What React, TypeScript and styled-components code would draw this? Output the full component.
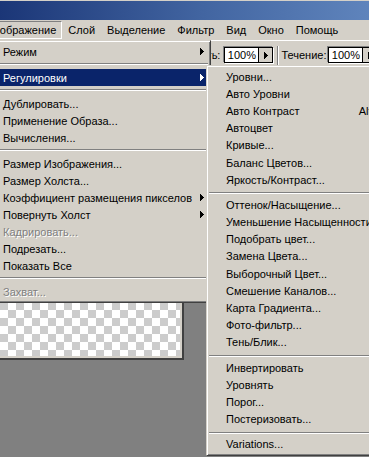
import React from 'react';
import styled, { createGlobalStyle } from 'styled-components';

type Entry =
  | { kind: 'sep' }
  | { kind: 'item'; label: string; arrow?: boolean; disabled?: boolean; active?: boolean; shortcut?: string };

type Metrics = { row: number; sep: number; line: number };

const sep: Entry = { kind: 'sep' };
const item = (label: string, extra: Partial<Omit<Extract<Entry, { kind: 'item' }>, 'kind' | 'label'>> = {}): Entry => ({
  kind: 'item',
  label,
  ...extra,
});

const imageMenu: Entry[] = [
  item('Режим', { arrow: true }),
  sep,
  item('Регулировки', { arrow: true, active: true }),
  sep,
  item('Дублировать...'),
  item('Применение Образа...'),
  item('Вычисления...'),
  sep,
  item('Размер Изображения...'),
  item('Размер Холста...'),
  item('Коэффициент размещения пикселов', { arrow: true }),
  item('Повернуть Холст', { arrow: true }),
  item('Кадрировать...', { disabled: true }),
  item('Подрезать...'),
  item('Показать Все'),
  sep,
  item('Захват...', { disabled: true }),
];

const adjustMenu: Entry[] = [
  item('Уровни...', { shortcut: 'Ctrl+L' }),
  item('Авто Уровни', { shortcut: 'Shift+Ctrl+L' }),
  item('Авто Контраст', { shortcut: 'Alt+Shift+Ctrl+L' }),
  item('Автоцвет', { shortcut: 'Shift+Ctrl+B' }),
  item('Кривые...', { shortcut: 'Ctrl+M' }),
  item('Баланс Цветов...', { shortcut: 'Ctrl+B' }),
  item('Яркость/Контраст...'),
  sep,
  item('Оттенок/Насыщение...', { shortcut: 'Ctrl+U' }),
  item('Уменьшение Насыщенности', { shortcut: 'Shift+Ctrl+U' }),
  item('Подобрать цвет...'),
  item('Замена Цвета...'),
  item('Выборочный Цвет...'),
  item('Смешение Каналов...'),
  item('Карта Градиента...'),
  item('Фото-фильтр...'),
  item('Тень/Блик...'),
  sep,
  item('Инвертировать', { shortcut: 'Ctrl+I' }),
  item('Уровнять'),
  item('Порог...'),
  item('Постеризовать...'),
  sep,
  item('Variations...'),
];

const menuBarItems = ['Изображение', 'Слой', 'Выделение', 'Фильтр', 'Вид', 'Окно', 'Помощь'];

const GlobalStyle = createGlobalStyle`
  html, body {
    margin: 0;
    padding: 0;
  }
  body {
    background: #808080;
    font-family: 'Liberation Sans', Arial, sans-serif;
    font-size: 11px;
    color: #000;
  }
`;

const Screen = styled.div`
  position: relative;
  width: 369px;
  height: 457px;
  overflow: hidden;
  background: #808080;
  display: flex;
  flex-direction: column;
`;

const TitleBar = styled.div`
  height: 19px;
  border-top: 1px solid #d4d0c8;
  background: linear-gradient(to right, #1b3677, #4265a1 55%, #5f84bc);
  flex-shrink: 0;
`;

const MenuBar = styled.div`
  height: 20px;
  background: #d4d0c8;
  display: flex;
  align-items: center;
  flex-shrink: 0;
`;

const MenuBarItem = styled.div<{ $open?: boolean; $first?: boolean }>`
  height: 16px;
  display: flex;
  align-items: center;
  padding: 0 5px;
  margin-left: ${({ $first }) => ($first ? '-19px' : '0')};
  border: 1px solid;
  border-color: ${({ $open }) => ($open ? '#808080 #fff #fff #808080' : 'transparent')};
  white-space: nowrap;
`;

const OptionsBar = styled.div`
  height: 25px;
  background: #d4d0c8;
  border-top: 1px solid #fff;
  display: flex;
  align-items: center;
  padding-left: 134px;
  flex-shrink: 0;
  white-space: nowrap;
`;

const FieldLabel = styled.span<{ $width: number }>`
  width: ${({ $width }) => $width}px;
  text-align: right;
  margin-right: 4px;
  padding-top: 2px;
`;

const NumberField = styled.div`
  display: flex;
  height: 14px;
  border: 1px solid #000;
  box-shadow: 1px 1px 0 #fff, -1px -1px 0 #808080;
  margin-top: 3px;
`;

const NumberValue = styled.div`
  width: 33px;
  background: #fff;
  display: flex;
  align-items: center;
  justify-content: center;
`;

const StepButton = styled.div`
  width: 13px;
  background: #d4d0c8;
  border-left: 1px solid #000;
  display: flex;
  align-items: center;
  justify-content: center;
`;

const BarDivider = styled.div`
  width: 0;
  height: 19px;
  border-left: 1px solid #808080;
  border-right: 1px solid #fff;
  margin: 3px 2px 0 4px;
`;

const Workspace = styled.div`
  flex: 1;
  background: #808080;
  padding-top: 60px;
`;

const DocWindow = styled.div`
  margin-left: -30px;
  width: 210px;
  height: 230px;
  background: #d4d0c8;
  padding: 0 2px 2px 0;
  border-right: 2px solid #404040;
  border-bottom: 2px solid #404040;
`;

const Checker = styled.div`
  width: 100%;
  height: 100%;
  background-color: #fff;
  background-image: conic-gradient(#cccccc 25%, #fff 0 50%, #cccccc 0 75%, #fff 0);
  background-size: 16px 16px;
  background-position: 6px 0;
`;

const Menu = styled.div<{ $left: number; $top: number; $width: number }>`
  position: absolute;
  left: ${({ $left }) => $left}px;
  top: ${({ $top }) => $top}px;
  width: ${({ $width }) => $width}px;
  box-sizing: border-box;
  background: #d4d0c8;
  border: 1px solid;
  border-color: #d4d0c8 #404040 #404040 #d4d0c8;
  box-shadow: inset 1px 1px 0 #fff, inset -1px -1px 0 #808080;
  padding: 2px;
`;

const MenuRow = styled.div<{ $active?: boolean; $disabled?: boolean; $height: number }>`
  height: ${({ $height }) => $height}px;
  display: flex;
  align-items: center;
  padding-left: 17px;
  white-space: nowrap;
  background: ${({ $active }) => ($active ? '#0a246a' : 'transparent')};
  color: ${({ $active, $disabled }) => ($active ? '#fff' : $disabled ? '#808080' : '#000')};
  text-shadow: ${({ $disabled }) => ($disabled ? '1px 1px 0 #fff' : 'none')};
`;

const RowLabel = styled.span`
  flex: 0 0 auto;
`;

const Shortcut = styled.span`
  margin-left: auto;
  padding-right: 18px;
  text-align: right;
`;

const ArrowSlot = styled.span`
  display: flex;
  flex-shrink: 0;
  width: 4px;
  margin-left: auto;
  margin-right: 4px;
`;

const Separator = styled.div<{ $height: number; $line: number }>`
  height: ${({ $height }) => $height}px;
  box-sizing: border-box;
  padding-top: ${({ $line }) => $line}px;

  &::before {
    content: '';
    display: block;
    height: 0;
    border-top: 1px solid #808080;
    border-bottom: 1px solid #fff;
  }
`;

const Arrow = ({ color = '#000' }: { color?: string }) => (
  <svg width="4" height="7" viewBox="0 0 4 7" shapeRendering="crispEdges">
    <path d="M0 0h1v7H0z M1 1h1v5H1z M2 2h1v3H2z M3 3h1v1H3z" fill={color} />
  </svg>
);

const MenuList = ({
  entries,
  left,
  top,
  width,
  metrics,
}: {
  entries: Entry[];
  left: number;
  top: number;
  width: number;
  metrics: Metrics;
}) => (
  <Menu $left={left} $top={top} $width={width}>
    {entries.map((entry, i) =>
      entry.kind === 'sep' ? (
        <Separator key={i} $height={metrics.sep} $line={metrics.line} />
      ) : (
        <MenuRow key={i} $height={metrics.row} $active={entry.active} $disabled={entry.disabled}>
          <RowLabel>{entry.label}</RowLabel>
          {entry.shortcut && <Shortcut>{entry.shortcut}</Shortcut>}
          {entry.arrow && (
            <ArrowSlot>
              <Arrow color={entry.active ? '#fff' : '#000'} />
            </ArrowSlot>
          )}
        </MenuRow>
      ),
    )}
  </Menu>
);

const App = () => (
  <>
    <GlobalStyle />
    <Screen>
      <TitleBar />
      <MenuBar>
        {menuBarItems.map((name, i) => (
          <MenuBarItem key={name} $first={i === 0} $open={i === 0}>
            {name}
          </MenuBarItem>
        ))}
      </MenuBar>
      <OptionsBar>
        <FieldLabel $width={87}>Непрозрачность:</FieldLabel>
        <NumberField>
          <NumberValue>100%</NumberValue>
          <StepButton>
            <Arrow />
          </StepButton>
        </NumberField>
        <BarDivider />
        <FieldLabel $width={43}>Течение:</FieldLabel>
        <NumberField>
          <NumberValue>100%</NumberValue>
          <StepButton>
            <Arrow />
          </StepButton>
        </NumberField>
      </OptionsBar>
      <Workspace>
        <DocWindow>
          <Checker />
        </DocWindow>
      </Workspace>
      <MenuList entries={imageMenu} left={-17} top={40} width={228} metrics={{ row: 17, sep: 9, line: 3 }} />
      <MenuList entries={adjustMenu} left={206} top={65} width={251} metrics={{ row: 17.2, sep: 8, line: 4 }} />
    </Screen>
  </>
);

export default App;
